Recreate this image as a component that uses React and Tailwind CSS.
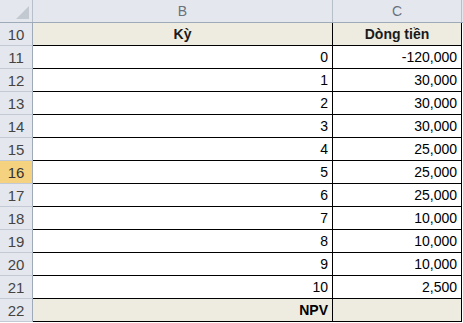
import React from "react";

const rows = [
  { n: 11, k: "0", v: "-120,000" },
  { n: 12, k: "1", v: "30,000" },
  { n: 13, k: "2", v: "30,000" },
  { n: 14, k: "3", v: "30,000" },
  { n: 15, k: "4", v: "25,000" },
  { n: 16, k: "5", v: "25,000", active: true },
  { n: 17, k: "6", v: "25,000" },
  { n: 18, k: "7", v: "10,000" },
  { n: 19, k: "8", v: "10,000" },
  { n: 20, k: "9", v: "10,000" },
  { n: 21, k: "10", v: "2,500" },
];

function RowHead({ n, active }) {
  return (
    <div
      className={`h-[23px] w-[33px] flex items-center justify-center border-r border-r-[#9eaab8] border-b border-b-[#c3cad3] text-[15px] ${
        active ? "bg-[#f5d27f] text-[#333]" : "bg-[#e4e8ee] text-[#444]"
      }`}
    >
      {n}
    </div>
  );
}

export default function App() {
  return (
    <div
      className="w-[463px] h-[323px] overflow-hidden bg-white text-[14px] leading-none"
      style={{ fontFamily: '"Liberation Sans", Arial, sans-serif' }}
    >
      {/* column headers */}
      <div className="flex h-[23px] bg-[#e4e8ee] border-b border-[#9eaab8] text-[#6a717b]">
        <div className="w-[33px] h-full border-r border-[#b7bfc9] relative">
          <svg className="absolute right-[3px] bottom-[3px]" width="13" height="13" viewBox="0 0 13 13">
            <polygon points="13,0 13,13 0,13" fill="#c3c9d1" />
          </svg>
        </div>
        <div className="w-[300px] h-full border-r border-[#b7bfc9] flex items-center justify-center">B</div>
        <div className="w-[129px] h-full border-r border-[#b7bfc9] flex items-center justify-center">C</div>
      </div>

      {/* row 10 */}
      <div className="flex">
        <RowHead n={10} />
        <div className="w-[300px] h-[23px] bg-[#eeece1] border-r border-b border-black flex items-center justify-center font-bold text-[#1a1a1a]">
          Kỳ
        </div>
        <div className="w-[129px] h-[23px] bg-[#eeece1] border-r border-b border-black flex items-center justify-center font-bold text-[#1a1a1a]">
          Dòng tiền
        </div>
      </div>

      {rows.map((r) => (
        <div key={r.n} className="flex">
          <RowHead n={r.n} active={r.active} />
          <div className="w-[300px] h-[23px] border-r border-b border-black flex items-center justify-end pr-[4px] text-black">
            {r.k}
          </div>
          <div className="w-[129px] h-[23px] border-r border-b border-black flex items-center justify-end pr-[4px] text-black">
            {r.v}
          </div>
        </div>
      ))}

      {/* row 22 */}
      <div className="flex">
        <RowHead n={22} />
        <div className="w-[300px] h-[23px] bg-[#eeece1] border-r border-b border-black flex items-center justify-end pr-[4px] font-bold text-black">
          NPV
        </div>
        <div className="w-[129px] h-[23px] bg-[#eeece1] border-r border-b border-black" />
      </div>
    </div>
  );
}
